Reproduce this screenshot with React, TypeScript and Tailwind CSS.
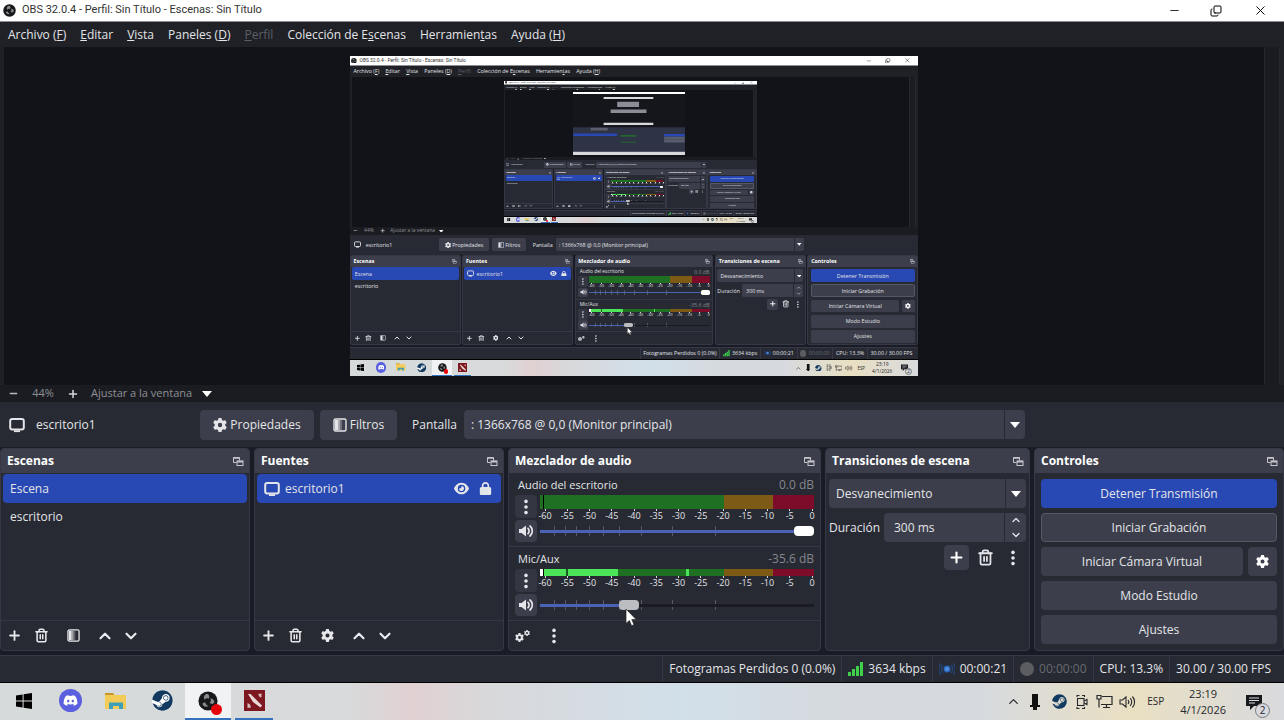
import { useId, type ReactNode } from "react";
import { ChevronDown, ChevronUp, Copy, Minus, Plus, Trash2, X } from "lucide-react";
import { FaDiscord, FaEye, FaGear, FaLock, FaSteam } from "react-icons/fa6";

const TICKS = ["-60", "-55", "-50", "-45", "-40", "-35", "-30", "-25", "-20", "-15", "-10", "-5", "0"];
const FADER_MARKS = [5, 9, 13, 18, 23, 29, 37, 48, 64];

const ObsLogo = ({ className }: { className?: string }) => (
  <svg viewBox="0 0 24 24" className={className} aria-hidden="true">
    <circle cx="12" cy="12" r="11.5" fill="#17181a" />
    <g fill="#8b8c90">
      <path d="M11 3.2a4.6 4.6 0 0 0-3 7.4 4.3 4.3 0 0 1 5-1.4A4.2 4.2 0 0 0 11 3.2z" />
      <path d="M19.6 14.2a4.6 4.6 0 0 0-4.6-5.2 4.3 4.3 0 0 1-1 5.2 4.2 4.2 0 0 0 5.6 0z" />
      <path d="M5.2 15.4a4.6 4.6 0 0 0 7.4 2.3 4.3 4.3 0 0 1-3.6-4 4.2 4.2 0 0 0-3.8 1.7z" />
    </g>
  </svg>
);

const MonitorIcon = () => (
  <svg viewBox="0 0 16 16" className="size-4 shrink-0" fill="none" stroke="currentColor" strokeWidth="2" aria-hidden="true">
    <rect x="1.2" y="2" width="13.6" height="10.4" rx="2" />
    <path d="M5 14.2h6" strokeWidth="1.8" />
  </svg>
);

const FilterIcon = ({ className }: { className?: string }) => (
  <svg viewBox="0 0 14 14" className={className} aria-hidden="true">
    <rect x="1" y="1" width="12" height="12" rx="1.5" fill="none" stroke="currentColor" strokeWidth="1.4" />
    <path d="M2 2h3v10H2z" fill="currentColor" />
    <path d="M5 2h2v10H5z" fill="currentColor" opacity=".65" />
    <path d="M7 2h2v10H7z" fill="currentColor" opacity=".3" />
  </svg>
);

const PopOutIcon = () => (
  <svg viewBox="0 0 11 11" className="size-[11px]" fill="none" stroke="currentColor" aria-hidden="true">
    <path d="M3.5 6.5h-3v-5h6v3" />
    <path d="M.5 2h6" strokeWidth="1.6" />
    <rect x="4" y="5" width="6" height="4.5" />
    <path d="M4 5.6h6" strokeWidth="1.6" />
  </svg>
);

const SpeakerIcon = () => (
  <svg viewBox="0 0 16 14" className="h-[14px] w-4" aria-hidden="true">
    <path d="M1 5h2.6L8 1.4v11.2L3.6 9H1z" fill="currentColor" />
    <path d="M10 4.4a3.6 3.6 0 0 1 0 5.2M12 2a6.6 6.6 0 0 1 0 10" fill="none" stroke="currentColor" strokeWidth="1.7" strokeLinecap="round" />
  </svg>
);

const DotsIcon = () => (
  <svg viewBox="0 0 4 16" className="h-4 w-1" fill="currentColor" aria-hidden="true">
    <circle cx="2" cy="2.4" r="1.8" />
    <circle cx="2" cy="8" r="1.8" />
    <circle cx="2" cy="13.6" r="1.8" />
  </svg>
);

const Triangle = ({ className = "" }: { className?: string }) => (
  <svg viewBox="0 0 10 6" className={`h-[6px] w-[10px] ${className}`} fill="currentColor" aria-hidden="true">
    <path d="M0 0h10L5 6z" />
  </svg>
);

const TitleBar = () => (
  <header className="flex h-[22px] shrink-0 items-center border-b border-[#8b8d92] bg-white pl-[3px] text-[11px] text-[#333]">
    <ObsLogo className="mr-[6px] size-[13px]" />
    <h1 className="font-[Roboto,sans-serif]">OBS 32.0.4 - Perfil: Sin Título - Escenas: Sin Título</h1>
    <div className="ml-auto flex pr-px text-black">
      <button aria-label="Minimizar" className="flex h-5 w-[42px] items-center justify-center">
        <Minus size={13} strokeWidth={1.5} />
      </button>
      <button aria-label="Restaurar" className="flex h-5 w-[42px] items-center justify-center">
        <Copy size={12} strokeWidth={2} className="-scale-x-100 rotate-180" />
      </button>
      <button aria-label="Cerrar" className="flex h-5 w-[46px] items-center justify-center">
        <X size={15} strokeWidth={1.5} />
      </button>
    </div>
  </header>
);

const MenuBar = () => (
  <nav className="flex h-[25px] shrink-0 items-center gap-[14px] bg-[#1f2126] px-2 text-[12px]">
    <button>Archivo (<u>F</u>)</button>
    <button><u>E</u>ditar</button>
    <button><u>V</u>ista</button>
    <button>Paneles (<u>D</u>)</button>
    <button disabled className="text-[#5d5f66]"><u>P</u>erfil</button>
    <button>Colección de E<u>s</u>cenas</button>
    <button>Herramien<u>t</u>as</button>
    <button>Ayuda (<u>H</u>)</button>
  </nav>
);

// Stands in for the capture once it is too small to hold any text.
const Thumbnail = () => (
  <svg viewBox="0 0 1280 720" className="h-[320px] w-[568px]" aria-hidden="true">
    <path d="M0 0h1280v22H0z" fill="#fff" />
    <path d="M0 22h1280v380H0z" fill="#15161b" />
    <path d="M350 56h568v24H350zM350 350h568v26H350z" fill="#d6dadb" />
    <path d="M505 110h250v60H505zM430 200h410v40H430z" fill="#8b8d96" />
    <path d="M0 402h1280v280H0z" fill="#2f3346" />
    <path d="M3 474h500v29H3zM1041 479h236v29h-236z" fill="#2848b4" />
    <path d="M544 495h180v14H544zM544 569h180v8H544z" fill="#1f7a26" />
    <path d="M1041 512h236v30h-236zM1041 546h236v30h-236zM200 409h197v30H200z" fill="#5a5d6b" />
    <path d="M0 682h1280v38H0z" fill="#d6dadb" />
  </svg>
);

// The captured monitor shows this same window, so the canvas repeats it.
const Preview = ({ depth }: { depth: number }) => (
  <section aria-label="Vista previa" className="flex min-h-0 flex-1 bg-[#1f2126] pr-1 pl-1">
    <div className="flex flex-1 items-center justify-center overflow-hidden bg-[#121318]">
      {depth > 0 ? (
        <div inert aria-hidden="true" className="h-[720px] w-[1280px] shrink-0 overflow-hidden [zoom:0.444]">
          <Desktop depth={depth - 1} />
        </div>
      ) : (
        <Thumbnail />
      )}
    </div>
    <div className="w-4 border-x border-[#26282e] bg-[#1b1c21]" />
  </section>
);

const ZoomBar = () => (
  <div className="flex h-[17px] shrink-0 items-center bg-[#1b1c21] pl-2 text-[11px] text-[#8e9096]">
    <button aria-label="Alejar" className="text-[#b9bac0]"><Minus size={11} strokeWidth={3} /></button>
    <span className="w-12 text-center">44%</span>
    <button aria-label="Acercar" className="text-[#d6d7dc]"><Plus size={12} strokeWidth={3} /></button>
    <button className="ml-3 flex items-center gap-[10px]">
      Ajustar a la ventana
      <Triangle className="text-white" />
    </button>
  </div>
);

const SourceToolbar = () => {
  const id = useId();
  return (
    <div className="flex h-[45px] shrink-0 items-center bg-[#272a33] pl-[9px] text-[12px]">
      <MonitorIcon />
      <span className="ml-[11px] w-[164px]">escritorio1</span>
      <button className="flex h-[30px] w-[114px] items-center justify-center gap-[3px] rounded-sm bg-[#3c3f4b]">
        <FaGear size={14} />
        Propiedades
      </button>
      <button className="ml-[6px] flex h-[30px] w-[77px] items-center justify-center gap-[3px] rounded-sm bg-[#3c3f4b]">
        <FilterIcon className="size-[14px]" />
        Filtros
      </button>
      <label htmlFor={id} className="mr-[7px] ml-[15px]">Pantalla</label>
      <Combo id={id} className="w-[44%]" value=": 1366x768 @ 0,0 (Monitor principal)" />
    </div>
  );
};

const Combo = ({ id, className = "", value, label }: { id?: string; className?: string; value: string; label?: string }) => (
  <div className={`flex h-[29px] items-center rounded-sm bg-[#3c3f4b] ${className}`}>
    <select id={id} aria-label={label} className="h-full min-w-0 flex-1 appearance-none border-r border-[#272a33] px-[7px] outline-none">
      <option>{value}</option>
    </select>
    <Triangle className="mx-[5px] text-white" />
  </div>
);

const Dock = ({ title, children }: { title: string; children: ReactNode }) => (
  <section className="flex min-w-0 flex-col overflow-hidden rounded border border-[#363945] bg-[#272a33]">
    <header className="flex h-6 shrink-0 items-center justify-between bg-[#3c3f4b] pr-[5px] pl-[6px]">
      <h2 className="text-[12px] font-bold text-white">{title}</h2>
      <button aria-label={`Desacoplar ${title}`} className="text-[#c5c6cc]">
        <PopOutIcon />
      </button>
    </header>
    {children}
  </section>
);

const ListFooter = ({ third, label }: { third: ReactNode; label: string }) => (
  <footer className="mt-auto flex h-[30px] shrink-0 items-center border-t border-[#363945] px-[6px] text-[#e6e7ea]">
    <button aria-label="Añadir"><Plus size={15} strokeWidth={3} /></button>
    <button aria-label="Eliminar" className="ml-3"><Trash2 size={15} strokeWidth={2.5} /></button>
    <button aria-label={label} className="ml-[18px]">{third}</button>
    <button aria-label="Subir" className="ml-4"><ChevronUp size={18} strokeWidth={3} /></button>
    <button aria-label="Bajar" className="ml-2"><ChevronDown size={18} strokeWidth={3} /></button>
  </footer>
);

const Scenes = () => (
  <Dock title="Escenas">
    <ul className="px-[2px] pt-px text-[12px]">
      <li className="flex h-[29px] items-center rounded-sm bg-[#2848b4] pl-[7px]">Escena</li>
      <li className="flex h-[28px] items-center pl-[7px]">escritorio</li>
    </ul>
    <ListFooter label="Filtros de escena" third={<FilterIcon className="size-[13px]" />} />
  </Dock>
);

const Sources = () => (
  <Dock title="Fuentes">
    <ul className="px-[2px] pt-px text-[12px]">
      <li className="flex h-[29px] items-center rounded-sm bg-[#2848b4] pr-[9px] pl-[7px]">
        <MonitorIcon />
        <span className="ml-[5px]">escritorio1</span>
        <button aria-label="Ocultar" className="ml-auto"><FaEye size={15} /></button>
        <button aria-label="Bloquear" className="ml-[10px]"><FaLock size={13} /></button>
      </li>
    </ul>
    <ListFooter label="Propiedades de fuente" third={<FaGear size={13} />} />
  </Dock>
);

type ChannelProps = { name: string; db: string; volume: number; live?: boolean };

const Channel = ({ name, db, volume, live }: ChannelProps) => {
  const id = useId();
  return (
    <div className="h-[74px] border-b border-[#363945] px-[6px] pt-[2px]">
      <div className="flex h-5 items-center justify-between pl-[3px] text-[11px]">
        <label htmlFor={id}>{name}</label>
        <output className="text-[12px] text-[#85878f]">{db}</output>
      </div>
      <div className="flex gap-[3px]">
        <div className="flex w-[22px] flex-col gap-[2px]">
          <button aria-label={`Opciones de ${name}`} className="flex h-[23px] items-center justify-center rounded-sm bg-[#343742]">
            <DotsIcon />
          </button>
          <button aria-label={`Silenciar ${name}`} className="flex h-[22px] items-center justify-center rounded-sm bg-[#3c3f4b]">
            <SpeakerIcon />
          </button>
        </div>
        <div className="flex min-w-0 flex-1 flex-col">
          {live ? (
            <div className="flex h-[7px]">
              <div className="w-[1%] bg-white" />
              <div className="w-px bg-black" />
              <div className="w-[8%] bg-[#4ce55a]" />
              <div className="w-[1%] bg-[#1b5c20]" />
              <div className="w-[18%] bg-[#4ce55a]" />
              <div className="w-[25%] bg-[#1f7023]" />
              <div className="w-[1%] bg-[#4ce55a]" />
              <div className="flex-1 bg-[#1f7023]" />
              <div className="w-[18%] bg-[#7d5b14]" />
              <div className="w-[15%] bg-[#7c0c2a]" />
            </div>
          ) : (
            <div className="flex h-[14px]">
              <div className="w-[1%] bg-[#1f7023]" />
              <div className="w-px bg-black" />
              <div className="flex-1 bg-[#1f7023]" />
              <div className="w-[18%] bg-[#7d5b14]" />
              <div className="w-[15%] bg-[#7c0c2a]" />
            </div>
          )}
          <div className="-mr-[9px] -ml-[6px] flex h-[12px] justify-between text-[9px] leading-[10px]">
            {TICKS.map((tick) => (
              <span key={tick} className="flex w-[22px] flex-col items-center">
                <i className="h-[2px] w-px shrink-0 bg-[#d7d8dc]" />
                {tick}
              </span>
            ))}
          </div>
          <div className={live ? "relative mt-[12px] h-[10px]" : "relative mt-[5px] h-[10px]"}>
            {FADER_MARKS.map((mark) => (
              <i key={mark} className="absolute top-0 h-[10px] w-px bg-[#555862]" style={{ left: `${mark}%` }} />
            ))}
            <i className="absolute inset-x-0 top-1 h-[3px] bg-[#1a1b20]" />
            <i className="absolute top-1 left-0 h-[3px] bg-[#4a62b8]" style={{ width: `${volume}%` }} />
            <input
              id={id}
              type="range"
              defaultValue={volume}
              className={`absolute inset-0 h-[10px] w-full appearance-none bg-transparent [&::-webkit-slider-thumb]:h-[10px] [&::-webkit-slider-thumb]:w-5 [&::-webkit-slider-thumb]:appearance-none [&::-webkit-slider-thumb]:rounded ${
                live ? "[&::-webkit-slider-thumb]:bg-[#bcbdc1]" : "[&::-webkit-slider-thumb]:bg-white"
              }`}
            />
            {live && (
              <svg viewBox="0 0 12 19" className="absolute top-[8px] left-[31%] z-10 h-[19px] w-3" aria-hidden="true">
                <path d="M1 1v14.5l3.4-3 2.2 5.2 2.4-1-2.2-5.1h4.4z" fill="#fff" stroke="#222" strokeWidth=".7" />
              </svg>
            )}
          </div>
        </div>
      </div>
    </div>
  );
};

const Mixer = () => (
  <Dock title="Mezclador de audio">
    <Channel name="Audio del escritorio" db="0.0 dB" volume={100} />
    <Channel name="Mic/Aux" db="-35.6 dB" volume={31} live />
    <footer className="flex flex-1 items-center pl-[6px]">
      <button aria-label="Propiedades avanzadas de audio" className="flex items-center">
        <FaGear size={9} className="mt-[3px]" />
        <FaGear size={6} className="mb-[5px]" />
      </button>
      <button aria-label="Menú del mezclador" className="ml-[22px]"><DotsIcon /></button>
    </footer>
  </Dock>
);

const Transitions = () => {
  const id = useId();
  return (
    <Dock title="Transiciones de escena">
      <div className="flex flex-col px-[3px] pt-[6px] text-[12px]">
        <Combo value="Desvanecimiento" label="Transición" />
        <div className="mt-[5px] flex items-center gap-1">
          <label htmlFor={id}>Duración</label>
          <div className="flex h-[29px] min-w-0 flex-1 rounded-sm bg-[#3c3f4b]">
            <input id={id} defaultValue="300 ms" className="min-w-0 flex-1 border-r border-[#272a33] pl-[10px] outline-none" />
            <div className="flex w-[21px] flex-col items-center justify-around">
              <button aria-label="Aumentar"><ChevronUp size={12} strokeWidth={2.5} /></button>
              <button aria-label="Reducir"><ChevronDown size={12} strokeWidth={2.5} /></button>
            </div>
          </div>
        </div>
        <div className="mt-[3px] flex items-center justify-end pr-[11px]">
          <button aria-label="Añadir transición" className="flex size-[25px] items-center justify-center rounded-sm bg-[#3c3f4b] text-white">
            <Plus size={17} strokeWidth={3} />
          </button>
          <button aria-label="Eliminar transición" className="ml-2"><Trash2 size={17} strokeWidth={2.5} /></button>
          <button aria-label="Opciones de transición" className="ml-[17px]"><DotsIcon /></button>
        </div>
      </div>
    </Dock>
  );
};

const Controls = () => (
  <Dock title="Controles">
    <div className="flex flex-col gap-[5px] px-[6px] pt-[6px] text-[12px]">
      <button className="h-[29px] rounded-sm bg-[#2848b4]">Detener Transmisión</button>
      <button className="h-[29px] rounded-sm border border-[#555965] bg-[#3c3f4b]">Iniciar Grabación</button>
      <div className="flex gap-[5px]">
        <button className="h-[29px] flex-1 rounded-sm bg-[#3c3f4b]">Iniciar Cámara Virtual</button>
        <button aria-label="Configurar cámara virtual" className="flex w-[29px] items-center justify-center rounded-sm bg-[#3c3f4b] text-white">
          <FaGear size={13} />
        </button>
      </div>
      <button className="h-[29px] rounded-sm bg-[#3c3f4b]">Modo Estudio</button>
      <button className="h-[29px] rounded-sm bg-[#3c3f4b]">Ajustes</button>
    </div>
  </Dock>
);

const StatusItem = ({ children }: { children: ReactNode }) => (
  <div className="flex h-full items-center gap-[5px] border-l border-[#363945] px-[6px]">{children}</div>
);

const StatusBar = () => (
  <footer className="flex h-[27px] shrink-0 items-center justify-end border-t border-[#363945] bg-[#272a33] pr-[7px] text-[12px]">
    <StatusItem>Fotogramas Perdidos 0 (0.0%)</StatusItem>
    <StatusItem>
      <svg viewBox="0 0 15 14" className="h-[14px] w-[15px]" fill="#3ed04a" aria-hidden="true">
        <path d="M0 10h3v4H0zM4 7h3v7H4zM8 4h3v10H8zM12 0h3v14h-3z" />
      </svg>
      3634 kbps
    </StatusItem>
    <StatusItem>
      <svg viewBox="0 0 16 14" className="h-[14px] w-4" fill="none" stroke="#234579" strokeWidth="1.4" aria-hidden="true">
        <circle cx="8" cy="7" r="2.8" fill="#4f8fe0" stroke="#2c66ba" />
        <path d="M4 3a5.6 5.6 0 0 0 0 8M12 3a5.6 5.6 0 0 1 0 8M1.8 1.4a8.6 8.6 0 0 0 0 11.2M14.2 1.4a8.6 8.6 0 0 1 0 11.2" />
      </svg>
      00:00:21
    </StatusItem>
    <StatusItem>
      <i className="size-[14px] rounded-full bg-[#5c5d61]" />
      <span className="text-[#686a71]">00:00:00</span>
    </StatusItem>
    <StatusItem>CPU: 13.3%</StatusItem>
    <StatusItem>30.00 / 30.00 FPS</StatusItem>
  </footer>
);

const Steam = ({ size }: { size: number }) => (
  <span className="rounded-full bg-white"><FaSteam size={size} color="#12395f" /></span>
);

const TaskButton = ({ label, active, open, children }: { label: string; active?: boolean; open?: boolean; children: ReactNode }) => (
  <button
    aria-label={label}
    className={`flex h-full w-[46px] items-center justify-center ${active ? "bg-[#f1f2f3]" : ""}`}
  >
    <span
      className={`flex h-full items-center justify-center border-b-2 ${active ? "w-full" : "w-[38px]"} ${
        open ? "border-[#3472bd]" : "border-transparent"
      }`}
    >
      {children}
    </span>
  </button>
);

const Taskbar = () => (
  <footer className="flex h-[38px] shrink-0 items-center border-t border-black bg-[linear-gradient(90deg,#d6dadb_0%,#d8dadb_27%,#e0d0d2_32%,#d8d8da_38%,#d2e0ea_53%,#d5dadf_64%,#d9dade_100%)] pl-px text-[#26282c]">
    <TaskButton label="Inicio">
      <svg viewBox="0 0 16 16" className="size-4" fill="#000" aria-hidden="true">
        <path d="M0 2.4l6.6-.9v6H0zM7.6 1.3L16 0v7.5H7.6zM0 8.5h6.6v6L0 13.6zM7.6 8.5H16V16l-8.4-1.3z" />
      </svg>
    </TaskButton>
    <TaskButton label="Discord">
      <span className="flex size-[23px] items-center justify-center rounded-full bg-[#5a60de] text-white">
        <FaDiscord size={15} />
      </span>
    </TaskButton>
    <TaskButton label="Explorador de archivos">
      <svg viewBox="0 0 22 18" className="h-[18px] w-[22px]" aria-hidden="true">
        <path d="M0 1h8l2 2h11v14H0z" fill="#f3cc57" />
        <path d="M0 1h8l1 2H0z" fill="#c79327" />
        <path d="M4 17v-6.5h14V17h-4v-3H8v3z" fill="#3f9fb9" />
      </svg>
    </TaskButton>
    <TaskButton label="Steam"><Steam size={21} /></TaskButton>
    <TaskButton label="OBS Studio" active open>
      <span className="relative">
        <ObsLogo className="size-5" />
        <i className="absolute -right-1 -bottom-1 size-[11px] rounded-full bg-[#e5040c]" />
      </span>
    </TaskButton>
    <TaskButton label="Dota 2" open>
      <svg viewBox="0 0 21 21" className="size-[21px]" aria-hidden="true">
        <path d="M0 0h21v21H0z" fill="#7d1820" />
        <path d="M4 4l2.500 0L18 15.500l-1.500 2L9 12z" fill="#ead9d7" />
        <path d="M14 4l3.500-.5v3.500l-1.500.5zM3.500 13l2.500 1.500 1 3-3.500.5z" fill="#d9bdbb" />
      </svg>
    </TaskButton>
    <div className="ml-auto flex h-full items-center bg-linear-to-r from-transparent via-[#e9dfc2] to-transparent pl-6">
      <button aria-label="Mostrar iconos ocultos"><ChevronUp size={15} strokeWidth={2} /></button>
      <svg viewBox="0 0 10 16" className="ml-[9px] h-4 w-[10px]" fill="#111" aria-hidden="true">
        <path d="M2 0h6v11H2zM0 11h10v2H7v3H3v-3H0z" />
      </svg>
      <span className="ml-3"><Steam size={15} /></span>
      <svg viewBox="0 0 14 16" className="ml-2 h-4 w-[14px]" fill="none" stroke="currentColor" strokeWidth="1.1" aria-hidden="true">
        <rect x="2.5" y="4.500" width="6.500" height="7" />
        <path d="M9 7l3-1.500v5L9 9M2 3V1.500h2.500M7 1.500h2.500V3M2 13v1.500h2.500M7 14.500h2.500V13" />
      </svg>
      <svg viewBox="0 0 17 15" className="ml-[7px] h-[15px] w-[17px]" fill="none" stroke="currentColor" strokeWidth="1.2" aria-hidden="true">
        <path d="M6 2.5h10v8H5M10.5 10.5v3M7 13.5h7M1 1.5h4v3.5H1zM3 5v8.5" />
      </svg>
      <svg viewBox="0 0 17 14" className="ml-[6px] h-[14px] w-[17px]" fill="none" stroke="currentColor" strokeWidth="1.1" aria-hidden="true">
        <path d="M1 5h2.5L7 2v10L3.500 9H1zM9 5a3 3 0 0 1 0 4M11.200 3.200a5.500 5.500 0 0 1 0 7.600M13.400 1.500a8 8 0 0 1 0 11" />
      </svg>
      <span className="ml-[11px] text-[10px]">ESP</span>
      <time className="ml-4 flex flex-col items-center text-[11px] leading-[16px]">
        <span>23:19</span>
        <span>4/1/2026</span>
      </time>
      <button aria-label="Notificaciones" className="relative mr-[22px] ml-5">
        <svg viewBox="0 0 16 16" className="size-4" aria-hidden="true">
          <path d="M0 1h16v11H8l-4 4v-4H0z" fill="#16181b" />
          <path d="M3 4h10M3 6.500h10M3 9h6" stroke="#d9dadf" />
        </svg>
        <span className="absolute -right-2 -bottom-2 flex size-[15px] items-center justify-center rounded-full border border-[#77797d] bg-[#d9dadf] text-[10px]">2</span>
      </button>
    </div>
  </footer>
);

function Desktop({ depth }: { depth: number }) {
  return (
    <div className="flex h-full flex-col bg-[#1a1c25] font-['Open_Sans',sans-serif] text-[#e4e5e9]">
      <TitleBar />
      <MenuBar />
      <Preview depth={depth} />
      <ZoomBar />
      <SourceToolbar />
      <main className="grid h-[204px] shrink-0 grid-cols-[250fr_250fr_313fr_205fr_250fr] gap-1 pt-px">
        <Scenes />
        <Sources />
        <Mixer />
        <Transitions />
        <Controls />
      </main>
      <div className="h-1 shrink-0" />
      <StatusBar />
      <Taskbar />
    </div>
  );
}

export default function App() {
  return (
    <div className="h-screen overflow-hidden">
      <Desktop depth={2} />
    </div>
  );
}
